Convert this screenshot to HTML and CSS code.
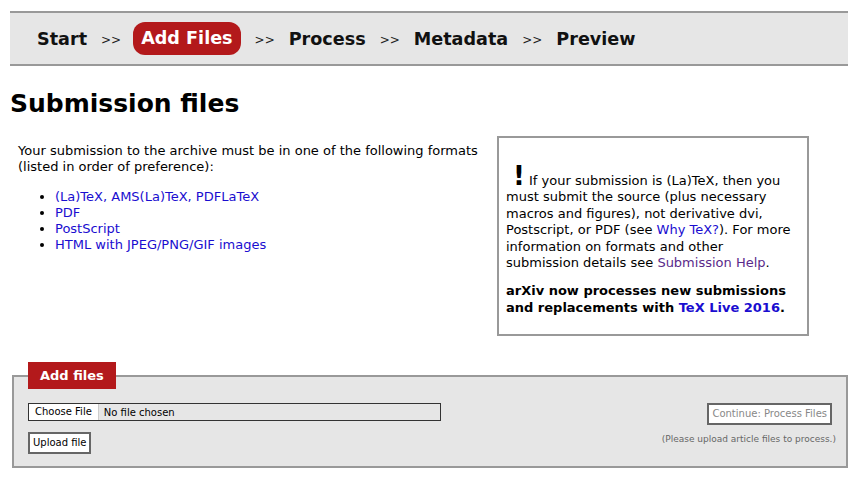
FILE: index.html
```html
<!DOCTYPE html>
<html>
<head>
<meta charset="utf-8">
<link rel="stylesheet" href="styles.css">
</head>
<body>
<div class="steps">
  <span class="step">Start</span>
  <span class="sep">&gt;&gt;</span>
  <span class="step current">Add Files</span>
  <span class="sep">&gt;&gt;</span>
  <span class="step">Process</span>
  <span class="sep">&gt;&gt;</span>
  <span class="step">Metadata</span>
  <span class="sep">&gt;&gt;</span>
  <span class="step">Preview</span>
</div>

<h1 class="title">Submission files</h1>

<div class="content">
  <div class="formats">
    <p class="intro">Your submission to the archive must be in one of the following formats (listed in order of preference):</p>
    <ul class="fmt-list">
      <li><a href="#">(La)TeX, AMS(La)TeX, PDFLaTeX</a></li>
      <li><a href="#">PDF</a></li>
      <li><a href="#">PostScript</a></li>
      <li><a href="#">HTML with JPEG/PNG/GIF images</a></li>
    </ul>
  </div>
  <div class="notice">
    <p class="notice-text"><span class="bang">!</span> If your submission is (La)TeX, then you must submit the source (plus necessary macros and figures), not derivative dvi, Postscript, or PDF (see <a href="#">Why TeX?</a>). For more information on formats and other submission details see <a href="#" class="visited">Submission Help</a>.</p>
    <p class="notice-strong">arXiv now processes new submissions and replacements with <a href="#">TeX Live 2016</a>.</p>
  </div>
</div>

<fieldset class="upload">
  <legend class="upload-legend">Add files</legend>
  <div class="upload-row">
    <div class="upload-left">
      <div class="file-input"><span class="choose">Choose File</span><span class="nofile">No file chosen</span></div>
      <span class="btn">Upload file</span>
    </div>
    <div class="upload-right">
      <span class="btn btn-disabled">Continue: Process Files</span>
      <span class="hint">(Please upload article files to process.)</span>
    </div>
  </div>
</fieldset>
</body>
</html>
```

FILE: styles.css
```css
html, body {
  margin: 0;
  padding: 0;
  background: #fff;
}
body {
  padding: 11px 12px 0 10px;
  font-family: "DejaVu Sans", sans-serif;
  font-size: 13px;
  color: #000;
}
.steps {
  display: flex;
  align-items: center;
  height: 51px;
  background: #e6e6e6;
  border-top: 2px solid #999;
  border-bottom: 2px solid #999;
  padding-left: 27px;
}
.step {
  font-size: 17.6px;
  font-weight: bold;
  color: #111;
}
.step.current {
  background: #b3191b;
  color: #fff;
  border-radius: 12px;
  padding: 6px 8px 7px;
  margin-left: -2px;
}
.sep {
  font-size: 12px;
  color: #222;
  margin: 3px 14px 0 14px;
}
.title {
  margin: 22px 0 0 0;
  font-size: 25px;
  font-weight: bold;
  line-height: 32px;
}
.content {
  display: flex;
  align-items: flex-start;
  margin-top: 18px;
}
.formats {
  flex: 1;
  padding-left: 8px;
}
.intro {
  margin: 5px 0 0 0;
  line-height: 16px;
}
.fmt-list {
  margin: 14px 0 0 0;
  padding-left: 37px;
  line-height: 16px;
}
a {
  color: #1a0dd0;
  text-decoration: none;
}
a.visited {
  color: #5a2a8a;
}
.notice {
  box-sizing: border-box;
  width: 312px;
  flex: none;
  border: 2px solid #999;
  margin: -2px 39px 0 0;
  padding: 30px 11px 18px 7px;
  line-height: 16.4px;
}
.notice-text {
  margin: 0;
}
.bang {
  font-size: 26px;
  font-weight: bold;
  margin-left: 7px;
  margin-right: 0;
}
.notice-strong {
  margin: 12px 0 0 0;
  font-weight: bold;
}
.upload {
  margin: 26px 0 0 2px;
  padding: 0 14px 12px 14px;
  border: 2px solid #999;
  background: #e6e6e6;
}
.upload-legend {
  background: #b3191b;
  color: #fff;
  font-weight: bold;
  font-size: 13px;
  line-height: 16px;
  padding: 6px 12px 5px;
  margin-left: 0;
}
.upload-row {
  display: flex;
  justify-content: space-between;
  margin-top: 14px;
}
.upload-left {
  display: flex;
  flex-direction: column;
  align-items: flex-start;
  gap: 11px;
}
.file-input {
  box-sizing: border-box;
  width: 413px;
  height: 18px;
  border: 1px solid #333;
  background: #e6e6e6;
  display: flex;
  align-items: center;
  font-size: 10px;
}
.choose {
  background: #fff;
  height: 16px;
  line-height: 16px;
  padding: 0 6px;
  border-right: 1px solid #ccc;
}
.nofile {
  padding-left: 5px;
}
.btn {
  display: inline-block;
  font-size: 10px;
  background: #fff;
  border: 2px solid #666;
  padding: 3px 3px;
  line-height: 12px;
}
.upload-right {
  display: flex;
  flex-direction: column;
  align-items: flex-end;
  gap: 9px;
}
.btn-disabled {
  color: #888;
}
.hint {
  font-size: 9px;
  color: #666;
  margin-right: -4px;
}
```
